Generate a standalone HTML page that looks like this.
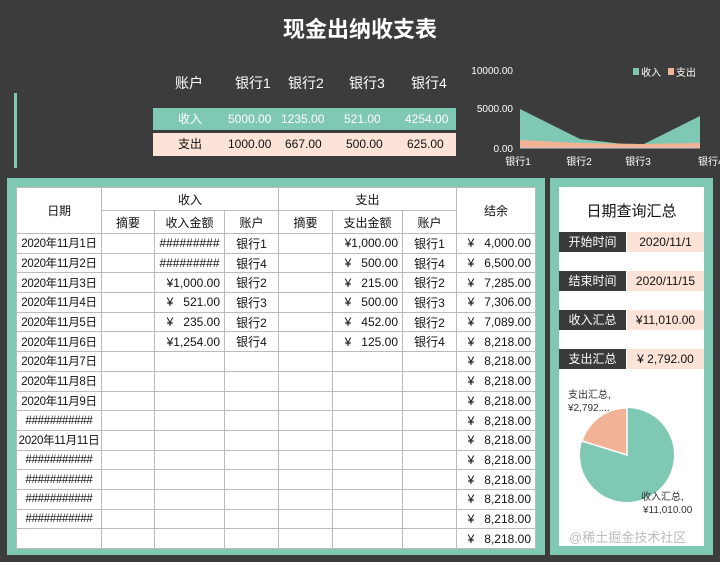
<!DOCTYPE html>
<html><head><meta charset="utf-8"><style>
*{margin:0;padding:0;box-sizing:border-box}
body{width:720px;height:562px;background:#3c3c3c;position:relative;overflow:hidden;font-family:"Liberation Sans","Noto Sans CJK SC",sans-serif;}
.a{position:absolute}
.t{color:#fff;font-size:14px}
table{border-collapse:collapse;table-layout:fixed;position:absolute;left:16px;top:187px;width:519px;background:#fff;font-size:12px;color:#111}
td{border:1px solid #bbb;height:19.7px;text-align:center;white-space:nowrap;overflow:hidden;padding:0 2px}
td:first-child{padding:0;font-size:11.5px;letter-spacing:-0.3px}
td.r{text-align:right;padding-right:4px}
.lab{position:absolute;left:559px;width:67px;height:20px;background:#3a3a3a;color:#fff;font-size:12px;text-align:center;line-height:20px}
.val{position:absolute;left:627px;width:77px;height:20px;background:#fbe3d8;color:#111;font-size:12px;text-align:center;line-height:20px}
</style></head><body>
<div class="a" style="left:0;width:720px;top:12px;text-align:center;color:#fff;font-size:22px;font-weight:bold">现金出纳收支表</div>
<div class="a t" style="left:175px;top:73px">账户</div>
<div class="a t" style="left:235px;top:73px">银行1</div>
<div class="a t" style="left:288px;top:73px">银行2</div>
<div class="a t" style="left:349px;top:73px">银行3</div>
<div class="a t" style="left:411px;top:73px">银行4</div>
<div class="a" style="left:14px;top:93px;width:3px;height:75px;background:#7fc8b4"></div>
<div class="a" style="left:153px;top:108px;width:303px;height:22px;background:#7fc8b4;color:#fff;font-size:12px;line-height:22px">
<span class="a" style="left:25px">收入</span><span class="a" style="left:75px">5000.00</span><span class="a" style="left:128px">1235.00</span><span class="a" style="left:191px">521.00</span><span class="a" style="left:252px">4254.00</span></div>
<div class="a" style="left:153px;top:133px;width:303px;height:23px;background:#fbe3d8;color:#111;font-size:12px;line-height:23px">
<span class="a" style="left:25px">支出</span><span class="a" style="left:75px">1000.00</span><span class="a" style="left:132px">667.00</span><span class="a" style="left:193px">500.00</span><span class="a" style="left:254px">625.00</span></div>
<svg class="a" style="left:460px;top:60px" width="260" height="115">
<g font-size="10" fill="#fff" font-family="Liberation Sans,Noto Sans CJK SC,sans-serif">
<text x="53" y="14" text-anchor="end">10000.00</text><text x="53" y="52" text-anchor="end">5000.00</text><text x="53" y="92" text-anchor="end">0.00</text>
<text x="58" y="105" text-anchor="middle">银行1</text><text x="119" y="105" text-anchor="middle">银行2</text><text x="178" y="105" text-anchor="middle">银行3</text><text x="238" y="105">银行4</text>
<rect x="173" y="8" width="6" height="7" fill="#7fc8b4"/><text x="181" y="16">收入</text>
<rect x="208" y="8" width="6" height="7" fill="#f2b295"/><text x="216" y="16">支出</text></g>
<polygon points="60,49 120,79 180,86 240,56 240,88 60,88" fill="#7fc8b4"/>
<polygon points="60,80 120,83 180,84 240,83 240,88 60,88" fill="#f2b295"/>
<line x1="60" y1="88" x2="240" y2="88" stroke="#ccc"/>
</svg>
<div class="a" style="left:7px;top:178px;width:538px;height:377px;background:#7fc8b4"></div>
<table>
<colgroup><col style="width:85px"><col style="width:53px"><col style="width:70px"><col style="width:54px"><col style="width:54px"><col style="width:70px"><col style="width:54px"><col style="width:79px"></colgroup>
<tr><td rowspan="2" style="height:46px;font-size:12px">日期</td><td colspan="3">收入</td><td colspan="3">支出</td><td rowspan="2">结余</td></tr>
<tr><td style="padding:0 2px;font-size:12px;letter-spacing:0">摘要</td><td>收入金额</td><td>账户</td><td>摘要</td><td>支出金额</td><td>账户</td></tr>
<tr><td>2020年11月1日</td><td></td><td>#########</td><td>银行1</td><td></td><td class="r">¥1,000.00</td><td>银行1</td><td class="r">¥ &nbsp; 4,000.00</td></tr>
<tr><td>2020年11月2日</td><td></td><td>#########</td><td>银行4</td><td></td><td class="r">¥ &nbsp; 500.00</td><td>银行4</td><td class="r">¥ &nbsp; 6,500.00</td></tr>
<tr><td>2020年11月3日</td><td></td><td class="r">¥1,000.00</td><td>银行2</td><td></td><td class="r">¥ &nbsp; 215.00</td><td>银行2</td><td class="r">¥ &nbsp; 7,285.00</td></tr>
<tr><td>2020年11月4日</td><td></td><td class="r">¥ &nbsp; 521.00</td><td>银行3</td><td></td><td class="r">¥ &nbsp; 500.00</td><td>银行3</td><td class="r">¥ &nbsp; 7,306.00</td></tr>
<tr><td>2020年11月5日</td><td></td><td class="r">¥ &nbsp; 235.00</td><td>银行2</td><td></td><td class="r">¥ &nbsp; 452.00</td><td>银行2</td><td class="r">¥ &nbsp; 7,089.00</td></tr>
<tr><td>2020年11月6日</td><td></td><td class="r">¥1,254.00</td><td>银行4</td><td></td><td class="r">¥ &nbsp; 125.00</td><td>银行4</td><td class="r">¥ &nbsp; 8,218.00</td></tr>
<tr><td>2020年11月7日</td><td></td><td></td><td></td><td></td><td></td><td></td><td class="r">¥ &nbsp; 8,218.00</td></tr>
<tr><td>2020年11月8日</td><td></td><td></td><td></td><td></td><td></td><td></td><td class="r">¥ &nbsp; 8,218.00</td></tr>
<tr><td>2020年11月9日</td><td></td><td></td><td></td><td></td><td></td><td></td><td class="r">¥ &nbsp; 8,218.00</td></tr>
<tr><td>###########</td><td></td><td></td><td></td><td></td><td></td><td></td><td class="r">¥ &nbsp; 8,218.00</td></tr>
<tr><td>2020年11月11日</td><td></td><td></td><td></td><td></td><td></td><td></td><td class="r">¥ &nbsp; 8,218.00</td></tr>
<tr><td>###########</td><td></td><td></td><td></td><td></td><td></td><td></td><td class="r">¥ &nbsp; 8,218.00</td></tr>
<tr><td>###########</td><td></td><td></td><td></td><td></td><td></td><td></td><td class="r">¥ &nbsp; 8,218.00</td></tr>
<tr><td>###########</td><td></td><td></td><td></td><td></td><td></td><td></td><td class="r">¥ &nbsp; 8,218.00</td></tr>
<tr><td>###########</td><td></td><td></td><td></td><td></td><td></td><td></td><td class="r">¥ &nbsp; 8,218.00</td></tr>
<tr><td></td><td></td><td></td><td></td><td></td><td></td><td></td><td class="r">¥ &nbsp; 8,218.00</td></tr>
</table>
<div class="a" style="left:550px;top:178px;width:163px;height:377px;background:#7fc8b4"></div>
<div class="a" style="left:559px;top:187px;width:145px;height:359px;background:#fff"></div>
<div class="a" style="left:559px;top:200px;width:145px;text-align:center;font-size:15px;color:#111">日期查询汇总</div>
<div class="lab" style="top:232px">开始时间</div><div class="val" style="top:232px">2020/11/1</div>
<div class="lab" style="top:271px">结束时间</div><div class="val" style="top:271px">2020/11/15</div>
<div class="lab" style="top:310px">收入汇总</div><div class="val" style="top:310px">¥11,010.00</div>
<div class="lab" style="top:349px">支出汇总</div><div class="val" style="top:349px">¥ 2,792.00</div>
<svg class="a" style="left:559px;top:380px" width="145" height="166" font-family="Liberation Sans,Noto Sans CJK SC,sans-serif">
<circle cx="68" cy="75" r="47" fill="#7fc8b4"/>
<path d="M68 75 L68 28 A47 47 0 0 0 23 61 Z" fill="#f2b295" stroke="#fff" stroke-width="1.5"/>
<text x="9" y="18" font-size="10" fill="#333">支出汇总,</text><text x="9" y="31" font-size="10" fill="#333">¥2,792....</text>
<text x="82" y="120" font-size="10" fill="#333">收入汇总,</text><text x="84" y="133" font-size="10" fill="#333">¥11,010.00</text>
<text x="10" y="162" font-size="13" fill="#bbb">@稀土掘金技术社区</text>
</svg>
</body></html>
